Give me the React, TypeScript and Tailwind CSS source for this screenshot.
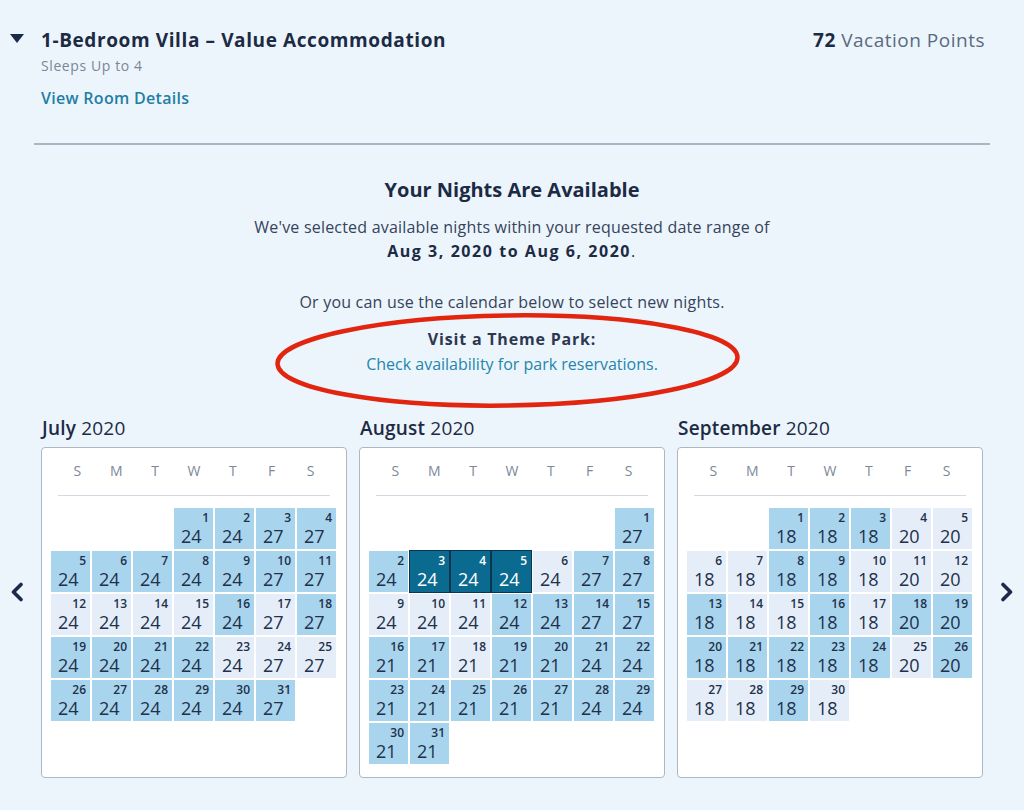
/* ===========================
   Villa availability - room header + 3-month points calendar
   =========================== */

type Tone = 'b' | 'p' | 's'

interface Month {
  name: string
  year: string
  offset: number
  prices: number[]
  tones: string
}

const week = [24, 24, 24, 24, 24, 27, 27]

const months: Month[] = [
  {
    name: 'July',
    year: '2020',
    offset: 3,
    prices: [24, 24, 27, 27, ...week, ...week, ...week, 24, 24, 24, 24, 24, 27],
    tones: 'bbbb' + 'bbbbbbb' + 'ppppbpb' + 'bbbbppp' + 'bbbbbb',
  },
  {
    name: 'August',
    year: '2020',
    offset: 6,
    prices: [27, ...week, ...week, 21, 21, 21, 21, 21, 24, 24, 21, 21, 21, 21, 21, 24, 24, 21, 21],
    tones: 'b' + 'bssspbb' + 'pppbbbb' + 'bbpbbbb' + 'bbbbbbb' + 'bb',
  },
  {
    name: 'September',
    year: '2020',
    offset: 2,
    prices: [
      18, 18, 18, 20, 20,
      18, 18, 18, 18, 18, 20, 20,
      18, 18, 18, 18, 18, 20, 20,
      18, 18, 18, 18, 18, 20, 20,
      18, 18, 18, 18,
    ],
    tones: 'bbbpp' + 'ppbbppp' + 'bppbpbb' + 'bbbbbpb' + 'ppbp',
  },
]

const toneClass: Record<Tone, string> = {
  b: 'bg-[#a8d5ed] text-[#22304a]',
  p: 'bg-[#e5eef8] text-[#22304a]',
  s: 'bg-[#0b6a8f] text-white outline outline-1 outline-[#0a3550]',
}

function DayCell({ day, price, tone }: { day: number; price: number; tone: Tone }) {
  return (
    <div className={`h-[41px] flex flex-col ${toneClass[tone]}`}>
      <span className="text-right pr-[4px] pt-[2px] text-[12px] leading-[15px] font-semibold">{day}</span>
      <span className="pl-[7px] text-[18px] leading-[22px]">{price}</span>
    </div>
  )
}

function Calendar({ month }: { month: Month }) {
  return (
    <div className="w-[306px] flex flex-col">
      <h3 className="text-[19px] leading-[24px] tracking-[0.2px] text-[#1d2a44] pl-[1px] mb-[7px]">
        <span className="font-semibold">{month.name}</span> {month.year}
      </h3>
      <div className="h-[331px] bg-white border border-[#aeb8c4] rounded-[4px] pt-[13px]">
        <div className="mx-[16px] grid grid-cols-7 text-center text-[14px] leading-[20px] text-[#7d8899]">
          {['S', 'M', 'T', 'W', 'T', 'F', 'S'].map((d, i) => (
            <span key={i}>{d}</span>
          ))}
        </div>
        <div className="mx-[16px] mt-[14px] h-px bg-[#d3d9e0]" />
        <div className="mt-[12px] pl-[9px] grid grid-cols-[repeat(7,39px)] gap-[2px]">
          {Array.from({ length: month.offset }).map((_, i) => (
            <div key={`e${i}`} />
          ))}
          {month.prices.map((p, i) => (
            <DayCell key={i} day={i + 1} price={p} tone={month.tones[i] as Tone} />
          ))}
        </div>
      </div>
    </div>
  )
}

function Chevron({ dir }: { dir: 'left' | 'right' }) {
  return (
    <svg width="14" height="20" viewBox="0 0 14 20" fill="none">
      <path
        d={dir === 'left' ? 'M11 2.5 L3.5 10 L11 17.5' : 'M3 2.5 L10.5 10 L3 17.5'}
        stroke="#1b2a48"
        strokeWidth="3.6"
        strokeLinecap="round"
        strokeLinejoin="round"
      />
    </svg>
  )
}

export default function App() {
  return (
    <div className="relative w-full h-[810px] bg-[#ecf5fc] font-['Open_Sans',sans-serif] text-[#1d2a44] overflow-hidden">
      {/* room header */}
      <div className="pt-[28px] pl-[10px] pr-[39px] flex justify-between">
        <div className="flex">
          <svg width="14" height="9" viewBox="0 0 14 9" className="mt-[6px]">
            <path d="M0 0 H14 L7 9 Z" fill="#1b2a48" />
          </svg>
          <div className="ml-[17px]">
            <h2 className="text-[19px] leading-[24px] font-bold tracking-[0.6px]">
              1-Bedroom Villa – Value Accommodation
            </h2>
            <p className="mt-[4px] text-[14px] leading-[20px] tracking-[0.6px] text-[#7b8696]">Sleeps Up to 4</p>
            <a className="block mt-[12px] text-[16px] leading-[20px] tracking-[0.3px] font-semibold text-[#1f7ea4]">
              View Room Details
            </a>
          </div>
        </div>
        <p className="text-[19px] leading-[24px] tracking-[0.5px] text-[#5b6a80]">
          <span className="font-bold text-[#1d2a44]">72</span> Vacation Points
        </p>
      </div>

      <div className="mx-[34px] mt-[35px] h-[2px] bg-[#a9b5c4]" />

      {/* availability message */}
      <div className="flex flex-col items-center text-center text-[16px] leading-[24px] tracking-[0.2px]">
        <h3 className="mt-[33px] text-[20px] font-bold tracking-normal">Your Nights Are Available</h3>
        <p className="mt-[13px] text-[#36435b]">
          We've selected available nights within your requested date range of
        </p>
        <p className="font-bold tracking-[1.55px]">
          Aug 3, 2020 to Aug 6, 2020<span className="font-normal">.</span>
        </p>
        <p className="mt-[27px] text-[#36435b]">Or you can use the calendar below to select new nights.</p>
        <p className="mt-[13px] font-bold tracking-[0.8px] text-[#2c3850]">Visit a Theme Park:</p>
        <a className="mt-[1px] tracking-normal text-[#2585aa]">Check availability for park reservations.</a>
      </div>

      {/* calendars */}
      <div className="mt-[40px] flex">
        <div className="w-[41px] flex justify-center pt-[166px] pr-[7px]">
          <Chevron dir="left" />
        </div>
        <div className="flex gap-[12px]">
          {months.map((m) => (
            <Calendar key={m.name} month={m} />
          ))}
        </div>
        <div className="flex-1 flex justify-center pt-[166px] pl-[6px]">
          <Chevron dir="right" />
        </div>
      </div>

      {/* annotation */}
      <svg className="absolute left-0 top-0 pointer-events-none" width="1024" height="810">
        <ellipse
          cx="507.5"
          cy="360.5"
          rx="230"
          ry="45"
          fill="none"
          stroke="#e2250f"
          strokeWidth="4.5"
          transform="rotate(-0.8 507.5 360.5)"
        />
      </svg>
    </div>
  )
}
